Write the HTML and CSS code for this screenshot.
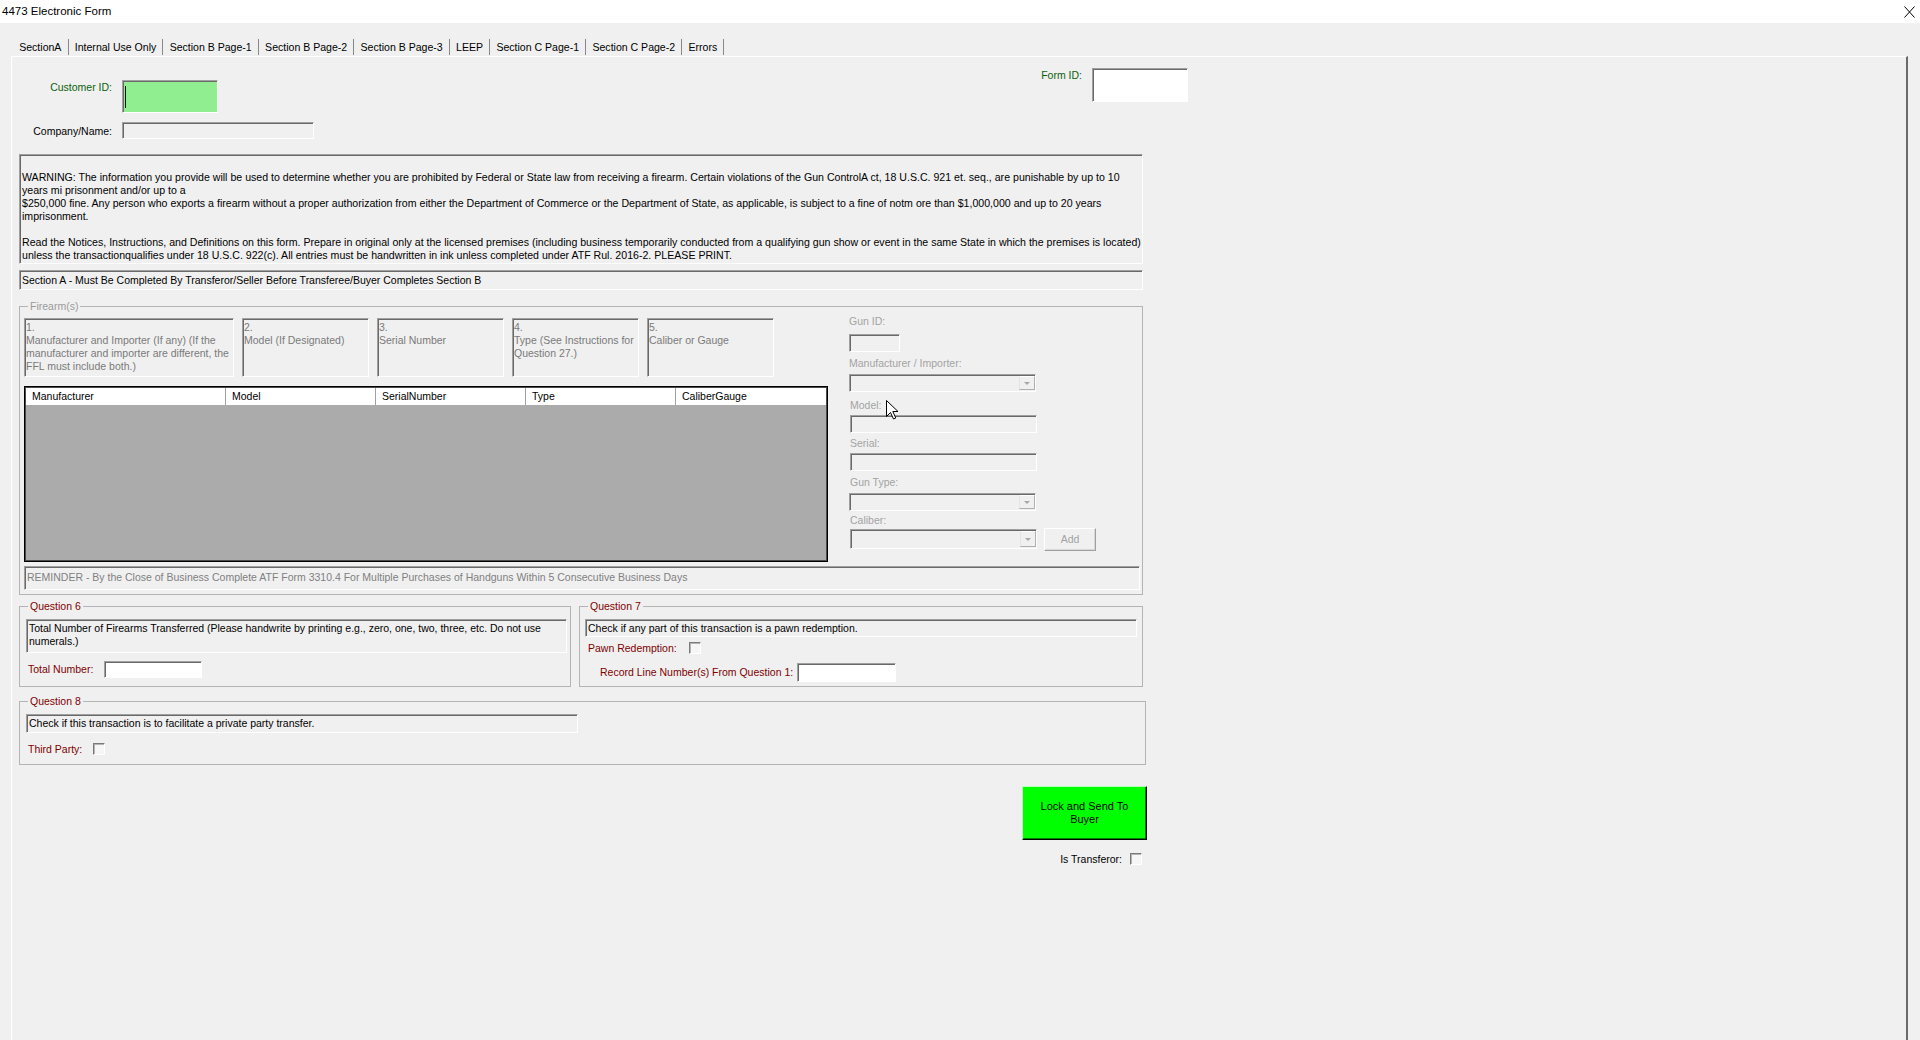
FILE: index.html
```html
<!DOCTYPE html>
<html lang="en">
<head>
<meta charset="utf-8">
<title>4473 Electronic Form</title>
<link rel="stylesheet" href="styles.css">
</head>
<body>
<div class="window">
  <header class="titlebar">
    <span class="title">4473 Electronic Form</span>
    <svg class="close" viewBox="0 0 11 12" width="11" height="12"><path d="M0.5 0.5 L10.5 11.5 M10.5 0.5 L0.5 11.5" stroke="#000" stroke-width="1" fill="none"/></svg>
  </header>
  <nav class="tabs">
    <span class="tab active">SectionA</span>
    <span class="tab">Internal Use Only</span>
    <span class="tab">Section B Page-1</span>
    <span class="tab">Section B Page-2</span>
    <span class="tab">Section B Page-3</span>
    <span class="tab">LEEP</span>
    <span class="tab">Section C Page-1</span>
    <span class="tab">Section C Page-2</span>
    <span class="tab">Errors</span>
  </nav>
  <main class="panel">
    <div class="head">
      <div class="ids">
        <label class="lbl-green lbl-cust">Customer ID:</label>
        <div class="tb cust"></div>
        <label class="lbl-company">Company/Name:</label>
        <div class="tb company"></div>
      </div>
      <div class="formid">
        <label class="lbl-green lbl-form">Form ID:</label>
        <div class="tb formbox"></div>
      </div>
    </div>

    <div class="warning inset">WARNING: The information you provide will be used to determine whether you are prohibited by Federal or State law from receiving a firearm. Certain violations of the Gun ControlA ct, 18 U.S.C. 921 et. seq., are punishable by up to 10<br>years mi prisonment and/or up to a<br>$250,000 fine. Any person who exports a firearm without a proper authorization from either the Department of Commerce or the Department of State, as applicable, is subject to a fine of notm ore than $1,000,000 and up to 20 years<br>imprisonment.<br><br>Read the Notices, Instructions, and Definitions on this form. Prepare in original only at the licensed premises (including business temporarily conducted from a qualifying gun show or event in the same State in which the premises is located)<br>unless the transactionqualifies under 18 U.S.C. 922(c). All entries must be handwritten in ink unless completed under ATF Rul. 2016-2. PLEASE PRINT.</div>

    <div class="sectionbar inset">Section A - Must Be Completed By Transferor/Seller Before Transferee/Buyer Completes Section B</div>

    <fieldset class="group firearms">
      <legend>Firearm(s)</legend>
      <div class="fa-body">
        <div class="fa-left">
          <div class="colheads">
            <div class="colhead inset wide">1.<br>Manufacturer and Importer (If any) (If the<br>manufacturer and importer are different, the<br>FFL must include both.)</div>
            <div class="colhead inset">2.<br>Model (If Designated)</div>
            <div class="colhead inset">3.<br>Serial Number</div>
            <div class="colhead inset">4.<br>Type (See Instructions for<br>Question 27.)</div>
            <div class="colhead inset">5.<br>Caliber or Gauge</div>
          </div>
          <div class="grid">
            <div class="grid-head">
              <span class="gh c1">Manufacturer</span>
              <span class="gh">Model</span>
              <span class="gh">SerialNumber</span>
              <span class="gh">Type</span>
              <span class="gh last">CaliberGauge</span>
            </div>
          </div>
        </div>
        <div class="fa-right">
          <label class="fl m2">Gun ID:</label>
          <div class="tb dis gunid m6"></div>
          <label class="fl m5">Manufacturer / Importer:</label>
          <div class="combo inset m4"><span class="dd"></span></div>
          <label class="fl m7 ind">Model:</label>
          <div class="tb dis long m3"></div>
          <label class="fl m4 ind">Serial:</label>
          <div class="tb dis long m3"></div>
          <label class="fl m5 ind">Gun Type:</label>
          <div class="combo inset m4"><span class="dd"></span></div>
          <label class="fl m3 ind">Caliber:</label>
          <div class="calrow m1">
            <div class="combo inset tall"><span class="dd"></span></div>
            <button class="addbtn" disabled>Add</button>
          </div>
        </div>
      </div>
      <div class="reminder inset">REMINDER - By the Close of Business Complete ATF Form 3310.4 For Multiple Purchases of Handguns Within 5 Consecutive Business Days</div>
    </fieldset>

    <div class="qrow">
      <fieldset class="group q6">
        <legend>Question 6</legend>
        <div class="desc inset d6">Total Number of Firearms Transferred (Please handwrite by printing e.g., zero, one, two, three, etc. Do not use<br>numerals.)</div>
        <div class="frow r-total">
          <label class="maroon w-total">Total Number:</label>
          <div class="tb total"></div>
        </div>
      </fieldset>
      <fieldset class="group q7">
        <legend>Question 7</legend>
        <div class="desc inset d7">Check if any part of this transaction is a pawn redemption.</div>
        <div class="frow r-pawn">
          <label class="maroon w-pawn">Pawn Redemption:</label>
          <span class="chk"></span>
        </div>
        <div class="frow r-record">
          <label class="maroon w-record">Record Line Number(s) From Question 1:</label>
          <div class="tb record"></div>
        </div>
      </fieldset>
    </div>

    <fieldset class="group q8">
      <legend>Question 8</legend>
      <div class="desc inset d8">Check if this transaction is to facilitate a private party transfer.</div>
      <div class="frow r-third">
        <label class="maroon w-third">Third Party:</label>
        <span class="chk"></span>
      </div>
    </fieldset>

    <div class="actions">
      <button class="lock">Lock and Send To<br>Buyer</button>
      <div class="transferor">
        <label>Is Transferor:</label>
        <span class="chk"></span>
      </div>
    </div>
  </main>
  <svg class="cursor" viewBox="0 0 13 20" width="13" height="20"><path d="M0.5 0.5 L0.5 16.5 L4.5 12.5 L7.5 19 L9.8 18 L6.8 11.5 L12 11.5 Z" fill="#fff" stroke="#000" stroke-width="1" stroke-linejoin="miter"/></svg>
</div>
</body>
</html>
```
FILE: styles.css
```css
* { box-sizing: border-box; }
html, body { margin: 0; height: 100%; }
body {
  background: #f0f0f0;
  font-family: "Liberation Sans", Arial, sans-serif;
  font-size: 10.5px;
  line-height: 13px;
  color: #000;
  overflow: hidden;
}
.window { position: relative; height: 1040px; display: flex; flex-direction: column; }

/* title bar */
.titlebar {
  flex: none; height: 23px; background: #fff;
  display: flex; align-items: center; justify-content: space-between;
  padding: 0 5px 0 2px; font-size: 11.5px;
}
.close { display: block; }

/* tabs */
.tabs { flex: none; display: flex; height: 33px; padding: 16px 0 0 13px; }
.tab {
  height: 16px; line-height: 16px; padding: 0 6.2px;
  border-right: 1px solid #888; white-space: nowrap;
  font-size: 10.55px;
}

/* tab page */
.panel {
  flex: 1; width: 1897px; margin-left: 11px;
  border-top: 1px solid #fff; border-left: 1px solid #fff;
  border-right: 2px solid #6b6b6b;
  padding-left: 7px;
}

/* generic 3D inset */
.inset {
  border: 1px solid; border-color: #a0a0a0 #fff #fff #a0a0a0;
  box-shadow: inset 1px 1px 0 #696969;
}
.tb {
  border: 1px solid; border-color: #a0a0a0 #fff #fff #a0a0a0;
  box-shadow: inset 1px 1px 0 #696969;
  background: #fff;
}
.tb.dis { background: #f0f0f0; }

label { display: block; }
.lbl-green { color: #0b620b; }
.maroon { color: #800000; }

/* header ids */
.head { display: flex; justify-content: space-between; align-items: flex-start; width: 1169px; }
.ids {
  margin-top: 23px; display: grid; grid-template-columns: 93px auto;
  column-gap: 10px; row-gap: 9px; align-items: start;
}
.ids label { text-align: right; white-space: nowrap; }
.lbl-cust { padding-top: 1px; }
.lbl-company { padding-top: 3px; }
.cust { position: relative; width: 96px; height: 33px; background: #90ee90; }
.cust::after {
  content: ""; position: absolute; left: 2px; top: 5px;
  width: 1px; height: 22px; background: #000;
}
.company { width: 192px; height: 17px; background: #f0f0f0; }
.formid { margin-top: 11px; display: flex; gap: 10px; }
.lbl-form { padding-top: 1px; }
.formbox { width: 96px; height: 34px; }

/* warning */
.warning {
  margin-top: 15px; width: 1124px; font-size: 10.6px;
  padding: 16px 2px 1px; white-space: nowrap;
}
.sectionbar {
  margin-top: 6px; width: 1124px; height: 20px;
  line-height: 18px; padding-left: 2px; white-space: nowrap;
}

/* group boxes */
.group { margin: 0; padding: 0; border: 1px solid #b4b4b4; min-width: 0; }
.group legend {
  padding: 0 2px; margin-left: 8px; line-height: 13px; color: #800000;
}
.firearms { margin-top: 10px; width: 1124px; padding-bottom: 4px; }
.firearms legend { color: #9a9a9a; }
.fa-body { display: flex; padding-left: 4px; }
.fa-left { margin-top: 5px; width: 804px; flex: none; }
.colheads { display: flex; gap: 8px; }
.colhead {
  width: 127px; height: 59px; padding: 2px 0 0 1px; flex: none;
  color: #7a7a7a; white-space: nowrap; overflow: hidden;
}
.colhead.wide { width: 210px; }

.grid {
  margin-top: 9px; width: 804px; height: 176px;
  border: 1px solid #000; box-shadow: inset 0 0 0 1px #4a4a4a;
  padding: 1px; background: #ababab;
}
.grid-head { display: flex; height: 17px; background: #fff; }
.gh {
  width: 150px; line-height: 17px; padding-left: 6px; flex: none;
  border-right: 1px solid #a0a0a0; white-space: nowrap;
}
.gh.c1 { width: 200px; }
.gh.last { flex: 1; border-right: 0; }

.fa-right { margin-left: 21px; width: 250px; flex: none; color: #a3a3a3; }
.fl { line-height: 13px; white-space: nowrap; }
.fl.ind { margin-left: 1px; }
.m1 { margin-top: 1px; } .m2 { margin-top: 2px; } .m3 { margin-top: 3px; }
.m4 { margin-top: 4px; } .m5 { margin-top: 5px; } .m6 { margin-top: 6px; }
.m7 { margin-top: 7px; }
.gunid { width: 51px; height: 18px; }
.tb.long { width: 187px; height: 18px; margin-left: 1px; }
.combo {
  width: 187px; height: 18px; background: #f0f0f0; flex: none;
  display: flex; justify-content: flex-end; padding: 1px 0 1px 0;
}
.combo.tall { height: 20px; margin-top: 1px; margin-left: 1px; }
.dd {
  width: 16px; height: 100%;
  border: 1px solid; border-color: #fff #b0b0b0 #b0b0b0 #e4e4e4;
  background: #f0f0f0; position: relative;
}
.dd::after {
  content: ""; position: absolute; left: 4px; top: 50%; margin-top: -1px;
  border-left: 3px solid transparent; border-right: 3px solid transparent;
  border-top: 3px solid #a8a8a8;
}
.calrow { display: flex; align-items: flex-start; gap: 7px; }
.addbtn {
  width: 52px; height: 23px; padding: 0; margin: 0; flex: none;
  font: inherit; color: #a3a3a3; background: #f0f0f0;
  border: 1px solid; border-color: #fff #a0a0a0 #a0a0a0 #fff;
  box-shadow: inset -1px -1px 0 #d8d8d8;
}

.reminder {
  margin: 4px 0 0 4px; width: 1116px; height: 24px;
  padding: 4px 0 0 2px; color: #808080; white-space: nowrap;
}

/* questions */
.qrow { display: flex; gap: 8px; margin-top: 5px; }
.q6 { width: 552px; padding-bottom: 8px; }
.q7 { width: 564px; padding-bottom: 4px; }
.desc { white-space: nowrap; padding-left: 2px; }
.d6 { margin: 6px 0 0 6px; width: 541px; height: 34px; padding-top: 2px; }
.d7 { margin: 6px 0 0 5px; width: 552px; height: 18px; line-height: 16px; }
.d8 { margin: 6px 0 0 6px; width: 552px; height: 19px; line-height: 15px; padding-top: 1px; }
.frow { display: flex; align-items: center; }
.frow label { white-space: nowrap; }
.r-total { margin: 8px 0 0 8px; }
.w-total { width: 76px; }
.total { width: 98px; height: 17px; }
.r-pawn { margin: 5px 0 0 8px; height: 12px; }
.w-pawn { width: 101px; }
.r-record { margin: 9px 0 0 20px; }
.w-record { width: 197px; }
.record { width: 99px; height: 19px; }

.q8 { margin-top: 8px; width: 1127px; padding-bottom: 9px; }
.r-third { margin: 10px 0 0 8px; height: 12px; }
.w-third { width: 65px; }

.chk {
  display: block; width: 12px; height: 12px;
  border: 1px solid; border-color: #7a7a7a #fff #fff #7a7a7a;
  box-shadow: inset 1px 1px 0 #b4b4b4; background: #f6f6f6;
}

/* bottom actions */
.actions {
  width: 1128px; margin-top: 21px;
  display: flex; flex-direction: column; align-items: flex-end;
}
.lock {
  width: 125px; height: 54px; margin: 0; padding: 0;
  background: #00ff00; color: #000; font: inherit; font-size: 11px; line-height: 13px;
  border: 1px solid; border-color: #b8ffb8 #000 #000 #b8ffb8;
  box-shadow: inset -1px -1px 0 #007a00;
}
.transferor {
  margin: 13px 5px 0 0; height: 12px;
  display: flex; align-items: center; gap: 8px;
}

/* mouse pointer overlay */
.cursor { position: absolute; left: 886px; top: 400px; }
```
